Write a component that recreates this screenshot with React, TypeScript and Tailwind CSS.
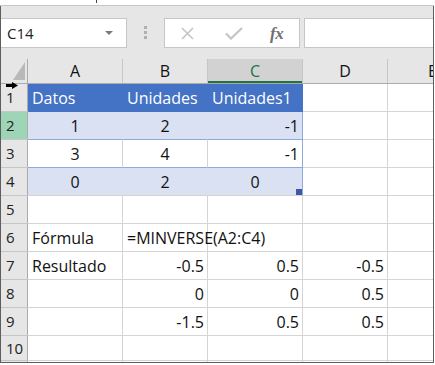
import React from "react";

const cols = [95, 85, 95, 85];

type Cell = { t?: string; align?: "l" | "c" | "r" };

function RowHeader({ n, active }: { n?: number; active?: boolean }) {
  return (
    <div
      className={`w-[27px] shrink-0 h-full border-r border-r-[#ababab] flex items-center pl-[5px] text-[15px] text-[#222] ${
        active ? "bg-[#9fd5b7]" : "bg-[#e6e6e6]"
      }`}
    >
      {n}
    </div>
  );
}

function SheetRow({
  n,
  cells,
  variant,
  h = 28,
  active,
}: {
  n?: number;
  cells: Cell[];
  variant: "head" | "band" | "plain" | "last" | "none";
  h?: number;
  active?: boolean;
}) {
  const rowH = h === 28 ? "h-[28px]" : h === 25 ? "h-[25px]" : "h-[10px]";
  return (
    <div className={`flex ${rowH} shrink-0`}>
      <div className="flex w-[27px] shrink-0 flex-col">
        <div className="flex-1 min-h-0">
          <RowHeader n={n} active={active} />
        </div>
        <div className="h-px bg-[#c6c6c6]" />
      </div>
      {cols.map((w, i) => {
        const c = cells[i] || {};
        const inTable = i < 3 && variant !== "none";
        let bg = "bg-white";
        let br = "border-r-[#d4d4d4]";
        let bb = "border-b-[#d4d4d4]";
        let color = "text-[#111]";
        if (inTable) {
          if (variant === "head") {
            bg = "bg-[#4472c4]";
            br = "border-r-[#4472c4]";
            bb = "border-b-[#4472c4]";
            color = "text-white";
          } else if (variant === "band" || variant === "last") {
            bg = "bg-[#d9e1f2]";
            br = i === 2 ? "border-r-[#8ea9db]" : "border-r-[#d9e1f2]";
            bb = variant === "last" ? "border-b-[#d4d4d4]" : "border-b-[#8ea9db]";
          } else {
            br = i === 2 ? "border-r-[#8ea9db]" : "border-r-[#d4d4d4]";
            bb = "border-b-[#8ea9db]";
          }
        }
        const al =
          c.align === "c" ? "justify-center" : c.align === "r" ? "justify-end pr-[3px]" : "justify-start pl-[4px]";
        const wc = w === 95 ? "w-[95px]" : "w-[85px]";
        return (
          <div
            key={i}
            className={`${wc} shrink-0 relative flex items-center whitespace-nowrap border-r border-b text-[16px] ${bg} ${br} ${bb} ${color} ${al}`}
          >
            {c.t && <span className="relative z-10">{c.t}</span>}
            {variant === "last" && i === 2 && (
              <div className="absolute right-0 bottom-0 w-[6px] h-[6px] bg-[#3f56ab]" />
            )}
          </div>
        );
      })}
      <div className="flex-1 border-b border-b-[#d4d4d4] bg-white" />
    </div>
  );
}

export default function App() {
  return (
    <div className="w-[435px] h-[365px] bg-white relative overflow-hidden font-['Open_Sans',sans-serif] leading-none">
      {/* top strip */}
      <div className="h-[5px] bg-white relative">
        <div className="absolute left-[96px] top-0 w-px h-[3px] bg-[#444]" />
      </div>
      <div className="w-[434px] h-px bg-[#c6c6c6]" />
      <div className="w-[434px] h-[357px] border-l border-r border-b border-[#5e5e5e] flex flex-col overflow-hidden">
        {/* toolbar */}
        <div className="h-[53px] shrink-0 bg-[#e6e6e6] flex items-start pt-[12px]">
          <div className="w-[126px] h-[30px] bg-white border border-l-0 border-[#c6c6c6] flex items-center justify-between pl-[6px] pr-[13px]">
            <span className="text-[15px] text-[#222]">C14</span>
            <svg width="8" height="4" viewBox="0 0 8 4">
              <path d="M0 0 L8 0 L4 4 Z" fill="#7a7a7a" />
            </svg>
          </div>
          <div className="w-[37px] h-[30px] flex flex-col items-center pt-[8px] gap-[2px]">
            <div className="w-[3px] h-[3px] bg-[#b0b0b0]" />
            <div className="w-[3px] h-[3px] bg-[#b0b0b0]" />
            <div className="w-[3px] h-[3px] bg-[#b0b0b0]" />
          </div>
          <div className="w-[136px] h-[30px] bg-white border border-[#c6c6c6] flex items-center pl-[16px]">
            <svg width="13" height="13" viewBox="0 0 13 13">
              <path d="M1 1 L12 12 M12 1 L1 12" stroke="#c4c4c4" strokeWidth="1.6" fill="none" />
            </svg>
            <svg width="18" height="13" viewBox="0 0 18 13" className="ml-[31px]">
              <path d="M1 6.5 L6 11.5 L17 1" stroke="#c4c4c4" strokeWidth="2.2" fill="none" />
            </svg>
            <span className="ml-[27px] font-['Liberation_Serif',serif] italic font-bold text-[17px] text-[#707070] tracking-[-0.5px]">
              fx
            </span>
          </div>
          <div className="flex-1 ml-[4px] h-[30px] bg-white border border-r-0 border-[#c6c6c6]" />
        </div>
        {/* column headers */}
        <div className="h-[25px] shrink-0 flex bg-[#e6e6e6] border-b border-b-[#ababab]">
          <div className="w-[27px] shrink-0 border-r border-r-[#ababab] relative">
            <svg width="12" height="18" viewBox="0 0 12 18" className="absolute left-[12px] top-[3px]">
              <path d="M12 0 L12 18 L0 18 Z" fill="#b9b9b9" />
            </svg>
          </div>
          <div className="w-[95px] shrink-0 border-r border-r-[#c6c6c6] flex items-center justify-center text-[16px] text-[#111]">A</div>
          <div className="w-[85px] shrink-0 border-r border-r-[#c6c6c6] flex items-center justify-center text-[16px] text-[#111]">B</div>
          <div className="w-[95px] shrink-0 border-r border-r-[#c6c6c6] bg-[#d2d2d2] relative flex items-center justify-center text-[16px] text-[#217346]">
            C
            <div className="absolute left-0 right-0 bottom-0 h-[2px] bg-[#217346]" />
          </div>
          <div className="w-[85px] shrink-0 border-r border-r-[#c6c6c6] flex items-center justify-center text-[16px] text-[#111]">D</div>
          <div className="flex-1 flex items-center pl-[40px] text-[16px] text-[#111]">E</div>
        </div>
        {/* rows */}
        <SheetRow n={1} variant="head" cells={[{ t: "Datos" }, { t: "Unidades" }, { t: "Unidades1" }]} />
        <SheetRow n={2} variant="band" active cells={[{ t: "1", align: "c" }, { t: "2", align: "c" }, { t: "-1", align: "r" }]} />
        <SheetRow n={3} variant="plain" cells={[{ t: "3", align: "c" }, { t: "4", align: "c" }, { t: "-1", align: "r" }]} />
        <SheetRow n={4} variant="last" cells={[{ t: "0", align: "c" }, { t: "2", align: "c" }, { t: "0", align: "c" }]} />
        <SheetRow n={5} variant="none" cells={[]} />
        <SheetRow n={6} variant="none" cells={[{ t: "Fórmula" }, { t: "=MINVERSE(A2:C4)" }]} />
        <SheetRow n={7} variant="none" cells={[{ t: "Resultado" }, { t: "-0.5", align: "r" }, { t: "0.5", align: "r" }, { t: "-0.5", align: "r" }]} />
        <SheetRow n={8} variant="none" cells={[{}, { t: "0", align: "r" }, { t: "0", align: "r" }, { t: "0.5", align: "r" }]} />
        <SheetRow n={9} variant="none" cells={[{}, { t: "-1.5", align: "r" }, { t: "0.5", align: "r" }, { t: "0.5", align: "r" }]} />
        <SheetRow n={10} variant="none" h={25} cells={[]} />
        <SheetRow variant="none" h={10} cells={[]} />
      </div>
      {/* row select arrow */}
      <svg width="12" height="7" viewBox="0 0 12 7" className="absolute left-[6px] top-[82px]">
        <path d="M0 2 L6 2 L6 0 L12 3.5 L6 7 L6 5 L0 5 Z" fill="#000" />
      </svg>
    </div>
  );
}
